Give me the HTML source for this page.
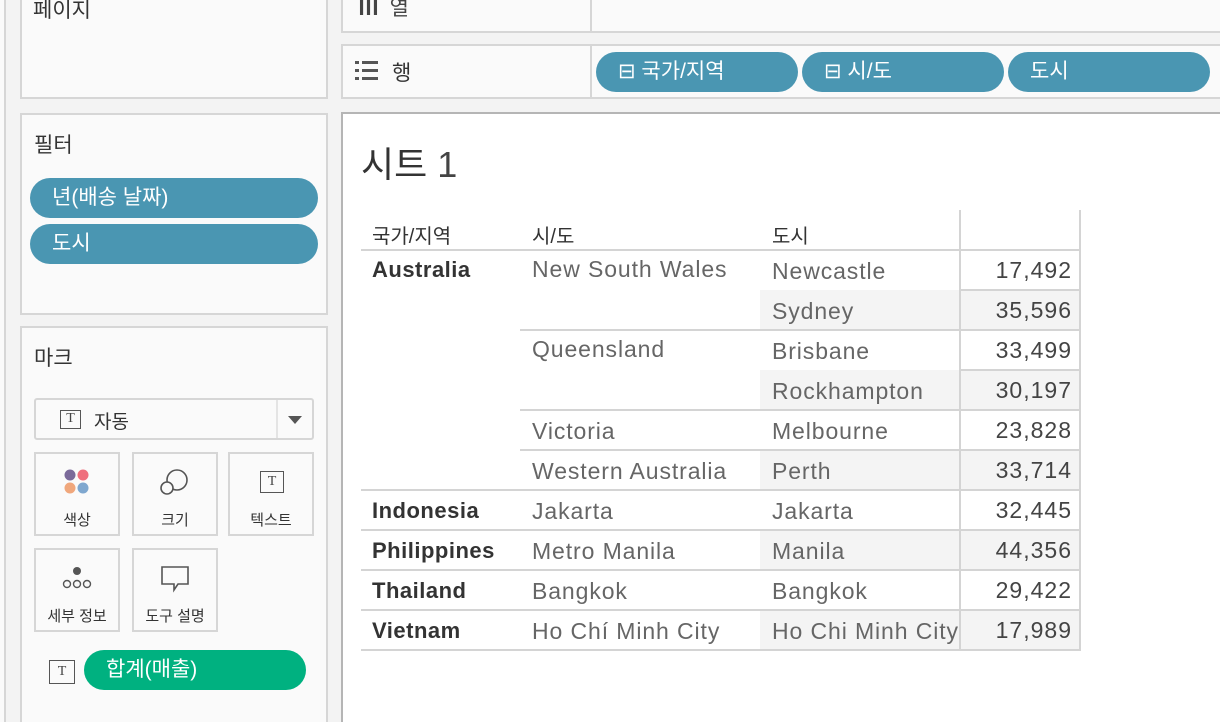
<!DOCTYPE html>
<html><head><meta charset="utf-8"><style>
*{margin:0;padding:0;box-sizing:border-box}
html,body{width:1220px;height:722px;overflow:hidden}
body{background:#f3f3f3;font-family:"Liberation Sans","Noto Sans CJK KR",sans-serif;position:relative}
.a{position:absolute}
.card{position:absolute;background:#fafafa;border:2px solid #d6d6d6}
.pill{position:absolute;background:#4a96b2;color:#fff;border-radius:20px;height:40px;font-size:21px;line-height:40px;padding-left:22px}
.t{position:absolute;font-size:23px;letter-spacing:0.9px;color:#666;white-space:nowrap}
.b{color:#333;font-weight:bold;font-size:22px;letter-spacing:0.5px}
.hl{position:absolute;height:2px;background:#d4d4d4}
.vl{position:absolute;width:2px;background:#d4d4d4}
.num{position:absolute;font-size:23px;letter-spacing:1px;color:#444;text-align:right;width:112px}
.mk{position:absolute;background:#fafafa;border:2px solid #d6d6d6;width:86px;height:84px;font-size:15px;color:#333;text-align:center}
.tb{display:inline-block;border:1.5px solid #555;font-family:"Liberation Serif",serif;font-size:14px;line-height:16px;width:21px;height:19px;text-align:center;color:#444}
</style></head><body>
<div class="a" style="left:0;top:0;width:6px;height:722px;background:#fafafa;border-right:2px solid #d6d6d6"></div>
<div class="card" style="left:20px;top:-4px;width:308px;height:103px"></div>
<div class="a" style="left:33px;top:-6px;font-size:21px;color:#333">페이지</div>
<div class="card" style="left:20px;top:113px;width:308px;height:202px"></div>
<div class="a" style="left:34px;top:129px;font-size:21px;color:#333">필터</div>
<div class="pill" style="left:30px;top:178px;width:288px">년(배송 날짜)</div>
<div class="pill" style="left:30px;top:224px;width:288px">도시</div>
<div class="card" style="left:20px;top:326px;width:308px;height:400px"></div>
<div class="a" style="left:34px;top:342px;font-size:21px;color:#333">마크</div>
<div class="a" style="left:34px;top:398px;width:280px;height:42px;border:2px solid #d6d6d6;border-radius:3px;background:#fafafa"></div>
<div class="a" style="left:60px;top:409px"><span class="tb">T</span></div>
<div class="a" style="left:94px;top:407px;font-size:19px;color:#333">자동</div>
<div class="a" style="left:276px;top:400px;width:2px;height:38px;background:#e4e4e4"></div>
<div class="a" style="left:288px;top:416px;width:0;height:0;border-left:7px solid transparent;border-right:7px solid transparent;border-top:8px solid #555"></div>
<div class="mk" style="left:34px;top:452px"><svg class="a" style="left:27px;top:14px" width="28" height="28"><circle cx="7" cy="7" r="5.5" fill="#7b6a9a"/><circle cx="20" cy="7" r="5.5" fill="#ef6f7d"/><circle cx="7" cy="20" r="5.5" fill="#f0a77c"/><circle cx="20" cy="20" r="5.5" fill="#7fa7cf"/></svg><div class="a" style="left:0;width:82px;top:55px">색상</div></div>
<div class="mk" style="left:132px;top:452px"><svg class="a" style="left:25px;top:14px" width="32" height="30" fill="none" stroke="#555" stroke-width="1.6"><circle cx="18" cy="12" r="10"/><circle cx="8" cy="20" r="6" fill="#fafafa"/></svg><div class="a" style="left:0;width:82px;top:55px">크기</div></div>
<div class="mk" style="left:228px;top:452px"><div class="a" style="left:30px;top:17px"><span class="tb" style="width:24px;height:22px;line-height:20px">T</span></div><div class="a" style="left:0;width:82px;top:55px">텍스트</div></div>
<div class="mk" style="left:34px;top:548px"><svg class="a" style="left:24px;top:16px" width="34" height="26" fill="none" stroke="#555" stroke-width="1.4"><circle cx="17" cy="5" r="4" fill="#555" stroke="none"/><circle cx="7" cy="18" r="3.5"/><circle cx="17" cy="18" r="3.5"/><circle cx="27" cy="18" r="3.5"/></svg><div class="a" style="left:0;width:82px;top:55px">세부 정보</div></div>
<div class="mk" style="left:132px;top:548px"><svg class="a" style="left:25px;top:14px" width="32" height="30" fill="none" stroke="#555" stroke-width="1.6"><path d="M3 3H29V20H19L15 26V20H3Z"/></svg><div class="a" style="left:0;width:82px;top:55px">도구 설명</div></div>
<div class="a" style="left:49px;top:660px"><span class="tb" style="width:26px;height:24px;line-height:22px">T</span></div>
<div class="pill" style="left:84px;top:650px;width:222px;background:#00b180;padding-left:22px">합계(매출)</div>

<div class="card" style="left:341px;top:-4px;width:890px;height:37px"></div>
<div class="a" style="left:590px;top:-4px;width:2px;height:37px;background:#d6d6d6"></div>
<div class="a" style="left:358px;top:-8px;font-size:21px;color:#444"><b style="letter-spacing:-1px">Ⅲ</b> &nbsp;열</div>
<div class="card" style="left:341px;top:44px;width:890px;height:55px"></div>
<div class="a" style="left:590px;top:44px;width:2px;height:55px;background:#d6d6d6"></div>
<svg class="a" style="left:355px;top:60px" width="24" height="22" fill="#555"><rect x="0" y="1" width="4" height="3"/><rect x="7" y="1" width="16" height="3"/><rect x="0" y="9" width="4" height="3"/><rect x="7" y="9" width="16" height="3"/><rect x="0" y="17" width="4" height="3"/><rect x="7" y="17" width="16" height="3"/></svg>
<div class="a" style="left:392px;top:57px;font-size:21px;color:#333">행</div>
<div class="pill" style="left:596px;top:52px;width:202px">⊟ 국가/지역</div>
<div class="pill" style="left:802px;top:52px;width:202px">⊟ 시/도</div>
<div class="pill" style="left:1008px;top:52px;width:202px;padding-left:22px">도시</div>

<div class="a" style="left:341px;top:112px;width:890px;height:620px;background:#fff;border-top:2px solid #b5b5b5;border-left:2px solid #b5b5b5"></div>
<div class="a" style="left:361px;top:136px;font-size:36px;color:#333">시트 <span style="color:#444">1</span></div>

<div class="a" style="left:760px;top:290px;width:320px;height:40px;background:#f4f4f4"></div>
<div class="a" style="left:760px;top:370px;width:320px;height:40px;background:#f4f4f4"></div>
<div class="a" style="left:760px;top:450px;width:320px;height:40px;background:#f4f4f4"></div>
<div class="a" style="left:760px;top:530px;width:320px;height:40px;background:#f4f4f4"></div>
<div class="a" style="left:760px;top:610px;width:320px;height:40px;background:#f4f4f4"></div>

<div class="t" style="left:372px;top:220px;color:#333;font-size:20px;letter-spacing:0">국가/지역</div>
<div class="t" style="left:532px;top:220px;color:#333;font-size:20px;letter-spacing:0">시/도</div>
<div class="t" style="left:772px;top:220px;color:#333;font-size:20px;letter-spacing:0">도시</div>
<div class="vl" style="left:959px;top:210px;height:440px"></div>
<div class="vl" style="left:1079px;top:210px;height:440px"></div>

<div class="hl" style="left:361px;top:249px;width:720px"></div>
<div class="hl" style="left:960px;top:289px;width:120px"></div>
<div class="hl" style="left:520px;top:329px;width:560px"></div>
<div class="hl" style="left:960px;top:369px;width:120px"></div>
<div class="hl" style="left:520px;top:409px;width:560px"></div>
<div class="hl" style="left:520px;top:449px;width:560px"></div>
<div class="hl" style="left:361px;top:489px;width:720px"></div>
<div class="hl" style="left:361px;top:529px;width:720px"></div>
<div class="hl" style="left:361px;top:569px;width:720px"></div>
<div class="hl" style="left:361px;top:609px;width:720px"></div>
<div class="hl" style="left:361px;top:649px;width:720px"></div>

<div class="t b" style="left:372px;top:257px">Australia</div>
<div class="t b" style="left:372px;top:498px">Indonesia</div>
<div class="t b" style="left:372px;top:538px">Philippines</div>
<div class="t b" style="left:372px;top:578px">Thailand</div>
<div class="t b" style="left:372px;top:618px">Vietnam</div>

<div class="t" style="left:532px;top:256px">New South Wales</div>
<div class="t" style="left:532px;top:336px">Queensland</div>
<div class="t" style="left:532px;top:418px">Victoria</div>
<div class="t" style="left:532px;top:458px">Western Australia</div>
<div class="t" style="left:532px;top:498px">Jakarta</div>
<div class="t" style="left:532px;top:538px">Metro Manila</div>
<div class="t" style="left:532px;top:578px">Bangkok</div>
<div class="t" style="left:532px;top:618px">Ho Chí Minh City</div>

<div class="t" style="left:772px;top:258px">Newcastle</div>
<div class="t" style="left:772px;top:298px">Sydney</div>
<div class="t" style="left:772px;top:338px">Brisbane</div>
<div class="t" style="left:772px;top:378px">Rockhampton</div>
<div class="t" style="left:772px;top:418px">Melbourne</div>
<div class="t" style="left:772px;top:458px">Perth</div>
<div class="t" style="left:772px;top:498px">Jakarta</div>
<div class="t" style="left:772px;top:538px">Manila</div>
<div class="t" style="left:772px;top:578px">Bangkok</div>
<div class="t" style="left:772px;top:618px">Ho Chi Minh City</div>

<div class="num" style="left:960px;top:257px">17,492</div>
<div class="num" style="left:960px;top:297px">35,596</div>
<div class="num" style="left:960px;top:337px">33,499</div>
<div class="num" style="left:960px;top:377px">30,197</div>
<div class="num" style="left:960px;top:417px">23,828</div>
<div class="num" style="left:960px;top:457px">33,714</div>
<div class="num" style="left:960px;top:497px">32,445</div>
<div class="num" style="left:960px;top:537px">44,356</div>
<div class="num" style="left:960px;top:577px">29,422</div>
<div class="num" style="left:960px;top:617px">17,989</div>
</body></html>
